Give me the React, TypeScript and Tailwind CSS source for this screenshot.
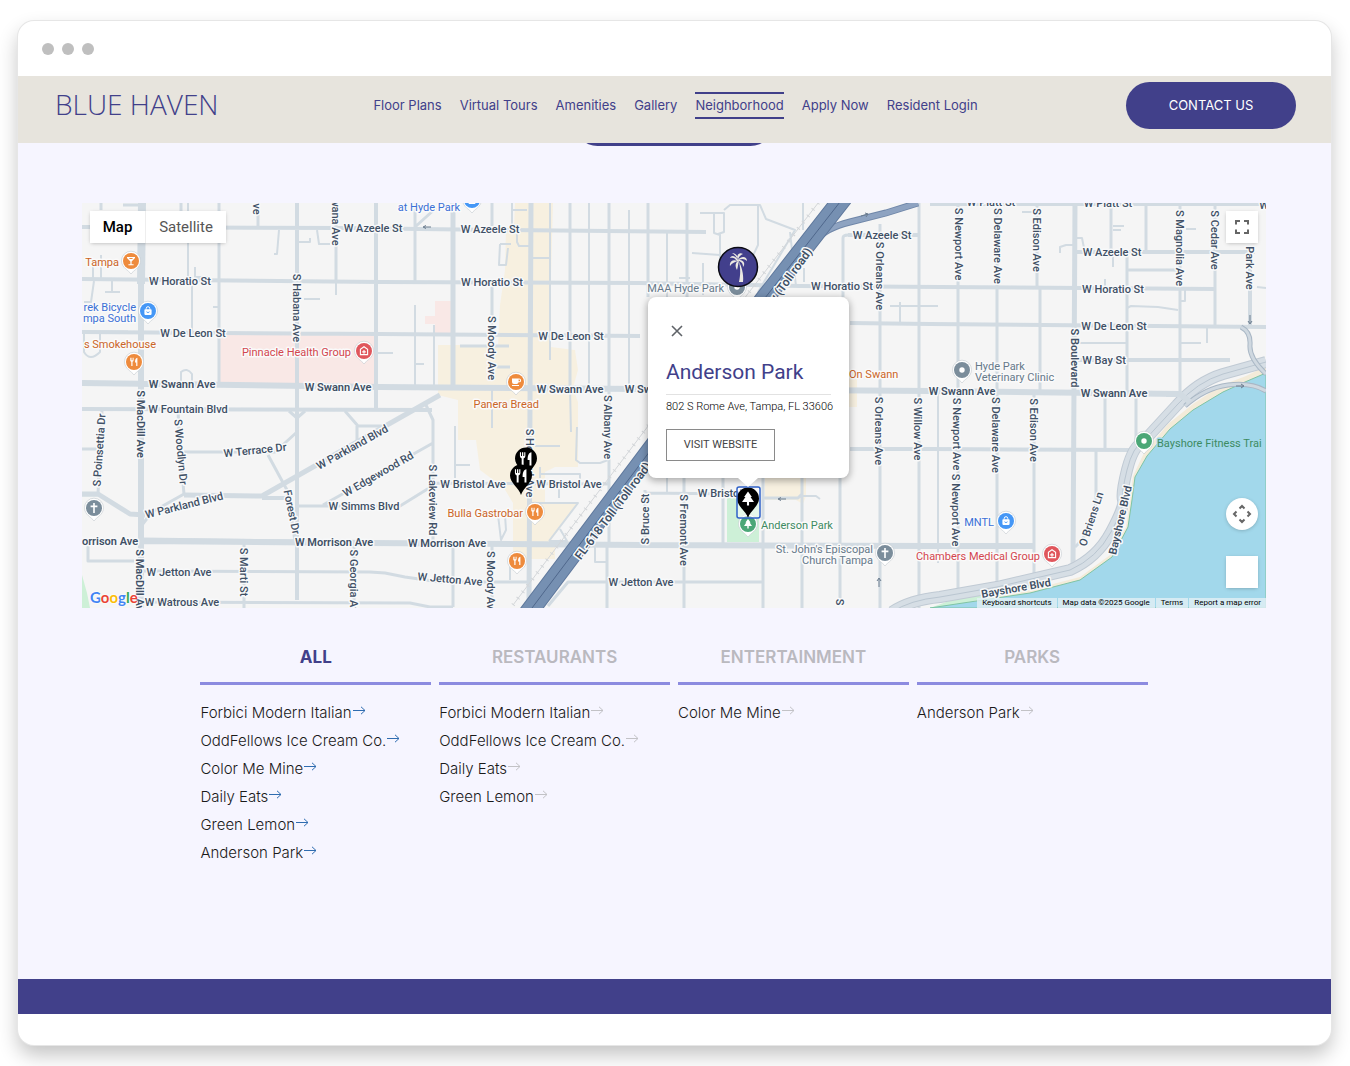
import type { ReactNode } from "react";

const NAV = [
  "Floor Plans",
  "Virtual Tours",
  "Amenities",
  "Gallery",
  "Neighborhood",
  "Apply Now",
  "Resident Login",
];

const CATEGORIES = [
  {
    name: "All",
    places: [
      "Forbici Modern Italian",
      "OddFellows Ice Cream Co.",
      "Color Me Mine",
      "Daily Eats",
      "Green Lemon",
      "Anderson Park",
    ],
  },
  {
    name: "Restaurants",
    places: ["Forbici Modern Italian", "OddFellows Ice Cream Co.", "Daily Eats", "Green Lemon"],
  },
  { name: "Entertainment", places: ["Color Me Mine"] },
  { name: "Parks", places: ["Anderson Park"] },
];

// Streets grouped by stroke width, widest last.
const STREETS = [
  {
    width: 2,
    d: "M188 203V282M192 285V332M101 255V279M93 265V279M94 281L91 302H84M112 281V292M105 292H120M195 267V277H210M219 285V307H213M336 282V295M304 299H320M279 230L277 254H274M317 230L319 244H330M299 242H310V238M415 305V388M434 325V385M376 353H393M416 364H424M550 203V360M589 203V388M629 210V388M667 232V297M512 203V226M512 210H527M533 258H550M517 224V242L519 246H529M500 244H511M500 244L499 265H506L508 248M492 388V428M570 388L571 432M577 427L576 460L580 463H600L608 460V450M455 426V478M455 465H470M535 446H560M540 467V478M540 474H580V483M559 486V498M527 503H578L549 541M560 529L567 541L549 541M498 515L501 540L506 530L505 515M510 567V580M595 547V562H608M667 478V492M890 306H938M900 302V322M790 232L796 286M804 268V282M804 286H790M822 310V330M938 394V563M1022 212H1032M1060 253V247L1066 245H1073M1077 238H1082L1084 248M1113 226H1124M1113 230H1121M1113 252V267M1105 279V286M1186 229H1196M1181 343H1201M1207 328V343M1078 343H1126M1185 290V301H1181M1127 308L1131 306L1158 307L1178 310M1257 287L1266 288M700 213H724V232L718 234M724 210L730 205H760L766 219L795 230L758 292M758 205V245L750 262M714 213V233L720 235V260M692 253L720 255M703 263V295M679 278H690M803 203V230M684 478V492M802 496H816L820 499M181 384V372Q187 367 192 374V384M84 333V352Q90 362 100 352V333",
  },
  {
    width: 3,
    d: "M101 203V210M123 205H145M181 203V215M219 203V383M258 203V228M336 203V282M415 203V282M415 227L436 208M492 203V226M492 285V330M609 203V545M570 203V388M648 203V297M687 203V297M843 297V238Q843 235 848 235M880 224V608M919 203V608M958 203V590M997 203V585M1037 203V287M1040 287V390M1034 395V575M1111 203V252M1146 203V252M1127 255V392M1180 203V392M1215 203V327M1105 396V450M1136 396V450M1096 450V500Q1094 530 1075 547M1128 270H1180M178 410L180 450L184 494M102 410L98 494M82 449H98M184 452H275L297 432V410M268 455L287 490L295 541M425 403L433 420V541M297 506H400L434 485M323 505L433 443M244 541V608M354 541V608M453 545V607M134 561H88V540M142 571L370 572L385 573L405 577L440 582H527M142 602L410 603L430 607H453M548 606L568 582H762M607 545V608M645 490V545M684 478V608M723 478V545M763 478V608M802 478V608M840 394V604M645 493L740 494M764 498L798 498L802 494M434 483L606 484Q609 484 609 480M345 411L358 426H382M357 426V440M289 411L297 418L305 411M98 495L82 495M142 525L152 512L184 494M492 545V600M460 346H509M497 367H510M82 332H128",
  },
  {
    width: 4,
    d: "M82 227L340 228L500 230L706 232M82 279L380 282L640 283L800 286L940 287L1215 289M82 332L380 334L640 336M850 323L930 324L1266 327M1077 360L1230 360M848 235H919M1077 252H1255M82 409L432 410M850 449L930 449L1131 450M930 204H1266M297 203V600M376 203V410M262 498H292M1250 260V327",
  },
  {
    width: 5,
    d: "M453 203V388M531 203L529 608M1075 203L1073 568M82 494L98 494L130 514L145 515M262 496L320 463L440 395M184 495L262 496M142 540L380 543",
  },
  {
    width: 6,
    d: "M82 383L380 387L640 389L930 391L1180 394M142 541L370 543L640 545M640 545L930 546H1034M141 280V608",
  },
  { width: 8, d: "M142 203L141 284" },
];

const BAYSHORE =
  "M892 612Q910 600 940 597L997 587 1070 570Q1097 558 1111 532T1123 500 1127 470 1143 442L1177 405Q1197 382 1223 374L1266 362";
const RAMPS = "M1185 406Q1205 388 1228 385T1266 391M1241 327Q1251 332 1250 345T1266 374";
const TOLL_ROAD = "M526 616L765 298 847 193";
const TOLL_EXIT = "M815 241Q825 228 850 222L886 213 918 203";

type Label = { t: string; x: number; y: number; r?: number; bold?: boolean };

const LABELS: Label[] = [
  { t: "ve", x: 257, y: 209, r: 90 },
  { t: "wana Ave", x: 336, y: 222, r: 90 },
  { t: "W Azeele St", x: 373, y: 228 },
  { t: "W Azeele St", x: 490, y: 229 },
  { t: "W Azeele St", x: 882, y: 235 },
  { t: "W Azeele St", x: 1112, y: 252 },
  { t: "W Horatio St", x: 180, y: 281 },
  { t: "W Horatio St", x: 492, y: 282 },
  { t: "W Horatio St", x: 842, y: 286 },
  { t: "W Horatio St", x: 1113, y: 289 },
  { t: "W De Leon St", x: 193, y: 333 },
  { t: "W De Leon St", x: 571, y: 336 },
  { t: "W De Leon St", x: 1114, y: 326 },
  { t: "W Bay St", x: 1104, y: 360 },
  { t: "W Platt St", x: 991, y: 202 },
  { t: "W Platt St", x: 1108, y: 203 },
  { t: "W", x: 1264, y: 205 },
  { t: "W Swann Ave", x: 182, y: 384, bold: true },
  { t: "W Swann Ave", x: 338, y: 387, bold: true },
  { t: "W Swann Ave", x: 570, y: 389, bold: true },
  { t: "W Swann Ave", x: 658, y: 389, bold: true },
  { t: "W Swann Ave", x: 962, y: 391, bold: true },
  { t: "W Swann Ave", x: 1114, y: 393, bold: true },
  { t: "W Fountain Blvd", x: 188, y: 409 },
  { t: "W Terrace Dr", x: 255, y: 450, r: -6 },
  { t: "W Parkland Blvd", x: 352, y: 447, r: -29 },
  { t: "W Parkland Blvd", x: 184, y: 505, r: -14 },
  { t: "W Edgewood Rd", x: 378, y: 474, r: -30 },
  { t: "W Simms Blvd", x: 364, y: 506 },
  { t: "W Bristol Ave", x: 473, y: 484 },
  { t: "W Bristol Ave", x: 569, y: 484 },
  { t: "W Bristol", x: 720, y: 493 },
  { t: "W Morrison Ave", x: 99, y: 541, bold: true },
  { t: "W Morrison Ave", x: 334, y: 542, bold: true },
  { t: "W Morrison Ave", x: 447, y: 543, bold: true },
  { t: "W Jetton Ave", x: 179, y: 572 },
  { t: "W Jetton Ave", x: 450, y: 579, r: 5 },
  { t: "W Jetton Ave", x: 641, y: 582 },
  { t: "W Watrous Ave", x: 182, y: 602 },
  { t: "S Habana Ave", x: 297, y: 308, r: 90 },
  { t: "S Moody Ave", x: 492, y: 348, r: 90 },
  { t: "S Moody Ave", x: 491, y: 583, r: 90 },
  { t: "S Howard Ave", x: 530, y: 463, r: 90 },
  { t: "S Albany Ave", x: 608, y: 427, r: 90 },
  { t: "S MacDill Ave", x: 141, y: 424, r: 90, bold: true },
  { t: "S MacDill Ave", x: 140, y: 583, r: 90, bold: true },
  { t: "S Poinsettia Dr", x: 99, y: 450, r: -86 },
  { t: "S Woodlyn Dr", x: 181, y: 452, r: 85 },
  { t: "Forest Dr", x: 292, y: 512, r: 78 },
  { t: "S Lakeview Rd", x: 433, y: 500, r: 90 },
  { t: "S Marti St", x: 244, y: 572, r: 90 },
  { t: "S Georgia Ave", x: 354, y: 584, r: 90 },
  { t: "S Bruce St", x: 645, y: 519, r: -90 },
  { t: "S Fremont Ave", x: 684, y: 530, r: 90 },
  { t: "S Orleans Ave", x: 880, y: 276, r: 90 },
  { t: "S Orleans Ave", x: 879, y: 431, r: 90 },
  { t: "S Willow Ave", x: 918, y: 429, r: 90 },
  { t: "S", x: 840, y: 602, r: 90 },
  { t: "S Newport Ave", x: 959, y: 244, r: 90 },
  { t: "S Newport Ave", x: 957, y: 434, r: 90 },
  { t: "S Newport Ave", x: 956, y: 510, r: 90 },
  { t: "S Delaware Ave", x: 998, y: 246, r: 90 },
  { t: "S Delaware Ave", x: 996, y: 435, r: 90 },
  { t: "S Edison Ave", x: 1037, y: 240, r: 90 },
  { t: "S Edison Ave", x: 1034, y: 430, r: 90 },
  { t: "S Magnolia Ave", x: 1180, y: 248, r: 90 },
  { t: "S Cedar Ave", x: 1215, y: 240, r: 90 },
  { t: "Hyde Park Ave", x: 1250, y: 254, r: 90 },
  { t: "S Boulevard", x: 1075, y: 358, r: 90, bold: true },
  { t: "O Briens Ln", x: 1091, y: 519, r: -72 },
  { t: "Bayshore Blvd", x: 1120, y: 520, r: -77, bold: true },
  { t: "Bayshore Blvd", x: 1016, y: 588, r: -10, bold: true },
];

const COLORS = {
  food: ["#ee8b3d", "#cb6527"],
  shop: ["#4597f6", "#3a70d6"],
  health: ["#e0565c", "#d3464e"],
  civic: ["#7b8d9b", "#66798a"],
  park: ["#4ba777", "#3d8b62"],
};

type Kind = keyof typeof COLORS;
type Glyph = "fork" | "glass" | "cup" | "bag" | "cross" | "clinic" | "dot" | "tree";

const POIS: { x: number; y: number; kind: Kind; glyph: Glyph }[] = [
  { x: 131, y: 261, kind: "food", glyph: "glass" },
  { x: 148, y: 311, kind: "shop", glyph: "bag" },
  { x: 134, y: 362, kind: "food", glyph: "fork" },
  { x: 364, y: 351, kind: "health", glyph: "clinic" },
  { x: 472, y: 200, kind: "shop", glyph: "bag" },
  { x: 516, y: 382, kind: "food", glyph: "cup" },
  { x: 535, y: 512, kind: "food", glyph: "fork" },
  { x: 517, y: 561, kind: "food", glyph: "fork" },
  { x: 737, y: 287, kind: "civic", glyph: "dot" },
  { x: 94, y: 508, kind: "civic", glyph: "cross" },
  { x: 748, y: 524, kind: "park", glyph: "tree" },
  { x: 885, y: 553, kind: "civic", glyph: "cross" },
  { x: 962, y: 370, kind: "civic", glyph: "dot" },
  { x: 1006, y: 521, kind: "shop", glyph: "bag" },
  { x: 1052, y: 554, kind: "health", glyph: "clinic" },
  { x: 1144, y: 441, kind: "park", glyph: "dot" },
];

const POI_LABELS: { t: string; x: number; y: number; kind: Kind; end?: boolean }[] = [
  { t: "Tampa", x: 119, y: 262, kind: "food", end: true },
  { t: "rek Bicycle", x: 136, y: 307, kind: "shop", end: true },
  { t: "mpa South", x: 136, y: 318, kind: "shop", end: true },
  { t: "s Smokehouse", x: 156, y: 344, kind: "food", end: true },
  { t: "Pinnacle Health Group", x: 351, y: 352, kind: "health", end: true },
  { t: "at Hyde Park", x: 460, y: 207, kind: "shop", end: true },
  { t: "Panera Bread", x: 539, y: 404, kind: "food", end: true },
  { t: "Bulla Gastrobar", x: 523, y: 513, kind: "food", end: true },
  { t: "MAA Hyde Park", x: 724, y: 288, kind: "civic", end: true },
  { t: "On Swann", x: 849, y: 374, kind: "food" },
  { t: "Anderson Park", x: 761, y: 525, kind: "park" },
  { t: "St. John's Episcopal", x: 873, y: 549, kind: "civic", end: true },
  { t: "Church Tampa", x: 873, y: 560, kind: "civic", end: true },
  { t: "Hyde Park", x: 975, y: 366, kind: "civic" },
  { t: "Veterinary Clinic", x: 975, y: 377, kind: "civic" },
  { t: "MNTL", x: 994, y: 522, kind: "shop", end: true },
  { t: "Chambers Medical Group", x: 1040, y: 556, kind: "health", end: true },
  { t: "Bayshore Fitness Trai", x: 1157, y: 443, kind: "park" },
];

function PoiGlyph({ glyph, fill }: { glyph: Glyph; fill: string }) {
  switch (glyph) {
    case "fork":
      return (
        <path
          d="M-3.8-4.2v2.4a1.6 1.6 0 0 0 1.1 1.5V4h1.2V-.3A1.6 1.6 0 0 0-.4-1.8v-2.4h-.7v2.4h-.6v-2.4h-.8v2.4h-.6v-2.4zM3.4-4.2C1.8-4 1-2.4 1 .6h1.2V4h1.2z"
          fill="#fff"
        />
      );
    case "glass":
      return <path d="M-4-4h8v1L.6.6v2.6h2v1h-5.2v-1h2V.6L-4-3zM-2-3l.8.9h2.4L2-3z" fill="#fff" />;
    case "cup":
      return (
        <path
          d="M-4-3.5h7.2a1.9 1.9 0 0 1 0 3.8h-.7A2 2 0 0 1 .6 2H-2a2 2 0 0 1-2-2zM2.6-2.5v1.8h.6a.9.9 0 0 0 0-1.8zM-4 3h7v1h-7z"
          fill="#fff"
        />
      );
    case "bag":
      return (
        <>
          <path d="M-1.8-1.5v-1a1.8 1.8 0 0 1 3.6 0v1" fill="none" stroke="#fff" />
          <rect x="-3.6" y="-1.7" width="7.2" height="5.6" rx=".8" fill="#fff" />
          <path d="M-1.3.4a1.3 1.3 0 0 0 2.6 0" fill="none" stroke={fill} strokeWidth=".8" />
        </>
      );
    case "cross":
      return <path d="M-.8-5H.8v2.6h2.6v1.6H.8V5H-.8V-.8h-2.6v-1.6H-.8z" fill="#fff" />;
    case "clinic":
      return (
        <path
          d="M-3.6 3.6v-5.2L0-4.2l3.6 2.6v5.2zM-1.8.9H1.8M0-.9V2.7"
          fill="none"
          stroke="#fff"
          strokeWidth="1.1"
        />
      );
    case "dot":
      return <circle r="2.7" fill="#fff" />;
    case "tree":
      return <path d="M0-5l2.6 3.6H1.7L4 2H.7v2.4H-.7V2H-4l2.3-3.4h-.9z" fill="#fff" />;
  }
}

function BlackPin({ x, y, children }: { x: number; y: number; children: ReactNode }) {
  return (
    <g transform={`translate(${x} ${y})`}>
      <path d="M0 19C-2 12-11 7-11-.5A11 11 0 0 1 11-.5C11 7 2 12 0 19z" fill="#000" />
      {children}
    </g>
  );
}

function StreetMap() {
  return (
    <svg
      className="block h-full w-full font-[Roboto,sans-serif]"
      viewBox="82 203 1184 405"
      preserveAspectRatio="xMidYMid slice"
      role="img"
      aria-label="Map of Hyde Park, Tampa"
    >
      <rect x="82" y="203" width="1184" height="405" fill="#f5f5f5" />

      {/* blocks */}
      <g fill="#f7f0e0">
        <path d="M515 203h38l-2 72v72l24 3 3 20-5 18 5 14v65h-23l-10 5v31h33l-29 40h6v16h-42v-56l-9-15-24-18-4-30h-18v-40l-20-5v-50h60l2-40 5-35 1-42h8z" />
        <path d="M765 470h41v26l-3 8-7-4h-31zM849 370h8v37h-8z" />
      </g>
      <path d="M220 334h156v52l-156-3zM435 301h16v32h-16v-9h-10v-8h10z" fill="#f9e8e6" />
      <path d="M727 498h32v44h-32zM82 575l5 18 3 15h-8zM930 608l70-26 40-7v10l-76 23z" fill="#cdf0d7" />

      {/* bay */}
      <path
        d="M1266 366L1246 376 1220 386 1193 404 1168 424 1144 453 1133 476 1130 500 1126 527 1110 555 1080 577 1030 590 963 603 963 608H1266z"
        fill="#f3ebd9"
      />
      <path
        d="M1266 373L1245 382 1223 392 1193 410 1170 429 1147 456 1135 477 1132 500 1128 527 1112 557 1080 580 1030 593 963 603 930 608H1266z"
        fill="#a2d8eb"
        stroke="#7fc4a4"
      />

      <g fill="none" stroke="#d2dbe2" strokeLinejoin="round">
        {STREETS.map((s) => (
          <path key={s.width} d={s.d} strokeWidth={s.width} />
        ))}
      </g>

      {/* Bayshore Blvd */}
      <g fill="none" strokeLinejoin="round">
        <path d={BAYSHORE} stroke="#c0cad4" strokeWidth="12" />
        <path d={BAYSHORE} stroke="#d6dee5" strokeWidth="10" />
        <path d={BAYSHORE} stroke="#bac6d1" strokeWidth="1" />
        <path d={RAMPS} stroke="#a9b7c5" strokeWidth="5" />
        <path d={RAMPS} stroke="#cfd8e0" strokeWidth="3" />
        <path d="M1166 394H1180L1190 402" stroke="#d2dbe2" strokeWidth="6" />
      </g>

      {/* expressway */}
      <g fill="none">
        <path d="M513 605L750 291 822 198" stroke="#d3d6d9" strokeWidth="1" />
        <path d="M513 605L750 291 822 198" stroke="#d3d6d9" strokeDasharray="1 7" strokeWidth="4" />
        <path d={TOLL_EXIT} stroke="#6f86a8" strokeWidth="7" />
        <path d={TOLL_EXIT} stroke="#8ea3c1" strokeWidth="5" />
        <path d={TOLL_ROAD} stroke="#60799d" strokeWidth="19" />
        <path d={TOLL_ROAD} stroke="#7690b2" strokeWidth="17" />
        <path d={TOLL_ROAD} stroke="#4f678c" strokeWidth="1" />
      </g>
      <path
        d="M431 227h-7m2-1.5l-3 1.5 3 1.5M861 216l7-2m-3-1l3 1-2 3M786 499h-7m2-1.5l-3 1.5 3 1.5M879 587v-8m-2 2l2-3 2 3M1250 315v8m-2-2l2 3 2-3M1236 386h7m-2-2l3 2-3 2"
        fill="none"
        stroke="#6b7c8e"
      />

      <g
        fill="#3f5065"
        stroke="#f8f9fa"
        strokeWidth="3"
        strokeLinejoin="round"
        paintOrder="stroke"
        textAnchor="middle"
        fontSize="11"
      >
        {LABELS.map((l) => (
          <text
            key={`${l.t}-${l.x}-${l.y}`}
            transform={`translate(${l.x} ${l.y}) rotate(${l.r ?? 0})`}
            y="4"
            fontWeight={l.bold ? 600 : 500}
          >
            {l.t}
          </text>
        ))}
        <text transform="translate(613 511) rotate(-53)" y="4" fontSize="12" fontWeight="600">
          FL-618 Toll (Toll road)
        </text>
        <text transform="translate(785 283) rotate(-54)" y="4" fontSize="12" fontWeight="600">
          Expy (Toll road)
        </text>
      </g>

      {POIS.map((p) => (
        <g key={`${p.x}-${p.y}`} transform={`translate(${p.x} ${p.y})`}>
          <path
            d="M0 13C-2 9.5-9.5 7-9.5-.3A9.5 9.5 0 0 1 9.5-.3C9.5 7 2 9.5 0 13z"
            fill="#fff"
            stroke="#c3c9ce"
            strokeWidth=".6"
          />
          <circle r="8" fill={COLORS[p.kind][0]} />
          <PoiGlyph glyph={p.glyph} fill={COLORS[p.kind][0]} />
        </g>
      ))}

      <g stroke="#fafafa" strokeWidth="3" strokeLinejoin="round" paintOrder="stroke" fontSize="11">
        {POI_LABELS.map((l) => (
          <text
            key={`${l.t}-${l.y}`}
            x={l.x}
            y={l.y + 4}
            fill={COLORS[l.kind][1]}
            stroke={l.t.startsWith("Bayshore") ? "#a2d8eb" : "#fafafa"}
            textAnchor={l.end ? "end" : "start"}
          >
            {l.t}
          </text>
        ))}
      </g>

      {/* property marker */}
      <g transform="translate(738 267)">
        <circle r="19.5" fill="#423f8c" stroke="#0b0b14" strokeWidth="1.5" />
        <path
          d="M1 15C2.5 8 3-1 0-7 3-2 6 6 5 15zM0-7C-3-12-7-12-8-9-5-10-3-9-1-6-5-8-9-5-8-1-6-4-3-5 0-6-3-4-3 0-1 3 0 0 0-3 1-6 4-5 5-3 5 0 8-4 5-7 1-7 4-9 7-8 9-6 9-10 4-12 0-7 1-11 3-12 5-13 1-15-2-12 0-7zM0-7C-2-11-4-13-6-14-3-14 0-12 0-7z"
          fill="#ece9e2"
        />
      </g>

      <BlackPin x={526} y={459}>
        <g transform="scale(1.6)">
          <PoiGlyph glyph="fork" fill="#000" />
        </g>
      </BlackPin>
      <BlackPin x={521} y={476}>
        <g transform="scale(1.6)">
          <PoiGlyph glyph="fork" fill="#000" />
        </g>
      </BlackPin>
      <rect x="737" y="487" width="23" height="31" rx="2" fill="#fff" fillOpacity=".5" />
      <BlackPin x={748} y={499}>
        <g transform="scale(1.5)">
          <PoiGlyph glyph="tree" fill="#000" />
        </g>
      </BlackPin>
      <rect x="737" y="487" width="23" height="31" rx="2" fill="none" stroke="#2f62c9" strokeWidth="1.5" />
    </svg>
  );
}

function InfoWindow() {
  return (
    <div className="absolute top-[94px] left-[566px] w-[201px] rounded-lg bg-white px-[18px] pt-[23px] pb-[17px] font-[Roboto,sans-serif] shadow-[0_2px_7px_1px_rgba(0,0,0,0.3)]">
      <button type="button" aria-label="Close" className="block p-[5px]">
        <svg width="12" height="12" viewBox="0 0 12 12" className="stroke-[#5f6368]" strokeWidth="1.6">
          <path d="M1 1l10 10M11 1L1 11" />
        </svg>
      </button>
      <h3 className="mt-[15px] border-b border-[#e2e2e2] pb-[7px] text-[21px] leading-[30px] whitespace-nowrap text-[#41408a]">
        Anderson Park
      </h3>
      <p className="mt-1 text-[11px] leading-4 font-light whitespace-nowrap text-black">
        802 S Rome Ave, Tampa, FL 33606
      </p>
      <a
        href="#anderson-park"
        className="mt-[14px] flex h-8 w-[109px] items-center justify-center border border-[#8a8a8a] text-[11px] text-[#444]"
      >
        VISIT WEBSITE
      </a>
      <div className="absolute top-full left-[90px] h-[9px] w-5 bg-white [clip-path:polygon(0_0,100%_0,50%_100%)]" />
    </div>
  );
}

function MapPanel() {
  return (
    <div className="relative h-[405px] overflow-hidden font-[Roboto,sans-serif]">
      <StreetMap />
      <InfoWindow />

      <div className="absolute top-2 left-2 flex h-8 bg-white text-[15px] shadow-[0_1px_4px_-1px_rgba(0,0,0,0.3)]">
        <button type="button" className="w-14 border-r border-[#eee] font-medium text-black">
          Map
        </button>
        <button type="button" className="w-20 text-[#565656]">
          Satellite
        </button>
      </div>

      <button
        type="button"
        aria-label="Toggle fullscreen view"
        className="absolute top-2 right-2 flex size-8 items-center justify-center bg-white shadow-[0_1px_4px_-1px_rgba(0,0,0,0.3)]"
      >
        <svg width="16" height="16" viewBox="0 0 16 16" fill="none" stroke="#666" strokeWidth="2">
          <path d="M2 5.500V2h4M10 2h4v3.500M14 10.500V14h-4M6 14H2v-3.500" />
        </svg>
      </button>
      <button
        type="button"
        aria-label="Map camera controls"
        className="absolute right-2 bottom-[78px] flex size-8 items-center justify-center rounded-full bg-white shadow-[0_1px_4px_-1px_rgba(0,0,0,0.3)]"
      >
        <svg width="20" height="20" viewBox="0 0 20 20" fill="none" stroke="#666" strokeWidth="2">
          <path d="M7.5 4.5L10 2 12.5 4.5M7.5 15.500l2.500 2.500 2.500-2.500M4.500 7.500L2 10 4.500 12.500M15.500 7.500l2.500 2.500-2.500 2.500" />
        </svg>
      </button>
      <button
        type="button"
        aria-label="Street View"
        className="absolute right-2 bottom-5 size-8 bg-white shadow-[0_1px_4px_-1px_rgba(0,0,0,0.3)]"
      />

      <a
        href="#google-maps"
        aria-label="Google"
        className="absolute bottom-0 left-2 font-[Lato,sans-serif] text-[15px] leading-[22px] font-bold [text-shadow:0_0_2px_#fff,0_0_2px_#fff]"
      >
        <span className="text-[#4285f4]">G</span>
        <span className="text-[#ea4335]">o</span>
        <span className="text-[#fbbc05]">o</span>
        <span className="text-[#4285f4]">g</span>
        <span className="text-[#34a853]">l</span>
        <span className="text-[#ea4335]">e</span>
      </a>

      <div className="absolute right-0 bottom-0 flex h-[10px] items-center gap-px text-[8px] leading-[10px] text-black">
        <button type="button" className="bg-[#e3f0f5]/80 px-[5px]">
          Keyboard shortcuts
        </button>
        <span className="bg-[#e3f0f5]/80 px-[5px]">Map data ©2025 Google</span>
        <a href="#terms" className="bg-[#e3f0f5]/80 px-[5px]">
          Terms
        </a>
        <a href="#report" className="bg-[#e3f0f5]/80 px-[5px]">
          Report a map error
        </a>
      </div>
    </div>
  );
}

function PlaceLink({ name, active }: { name: string; active: boolean }) {
  return (
    <li>
      <a href="#map" className="inline-flex items-center whitespace-nowrap">
        {name}
        <svg
          width="14"
          height="9"
          viewBox="0 0 14 9"
          fill="none"
          stroke={active ? "#2f6cb0" : "#c2c2c6"}
          className="mb-[6px]"
        >
          <path d="M1 4.5h12M9 .8l4 3.7-4 3.7" />
        </svg>
      </a>
    </li>
  );
}

export default function App() {
  return (
    <div className="bg-white pt-[21px] pb-[21px] font-[Inter,sans-serif]">
      <div className="mr-[19px] ml-[18px] overflow-hidden rounded-2xl bg-white shadow-[0_0_0_1px_#e6e6e6,0_10px_20px_rgba(0,0,0,0.24)]">
        <div className="flex h-[55px] items-center gap-2 px-6">
          <span className="size-3 rounded-full bg-[#bfbfbf]" />
          <span className="size-3 rounded-full bg-[#bfbfbf]" />
          <span className="size-3 rounded-full bg-[#bfbfbf]" />
        </div>

        <header className="relative z-10 grid grid-cols-[1fr_auto_1fr] items-center bg-[#e7e4dd] pt-[6px] pr-[35px] pb-[14px] pl-[37px] text-[#41408a]">
          <a href="#home" className="pb-1 font-['Open_Sans',sans-serif] text-[28px] leading-8 font-light">
            BLUE HAVEN
          </a>
          <nav className="flex gap-[18px] text-[13px]">
            {NAV.map((item) => (
              <a
                key={item}
                href={`#${item.toLowerCase().replace(" ", "-")}`}
                className={
                  item === "Neighborhood"
                    ? "border-y-2 border-[#41408a] leading-[23px] whitespace-nowrap"
                    : "border-y-2 border-transparent leading-[23px] whitespace-nowrap"
                }
              >
                {item}
              </a>
            ))}
          </nav>
          <a
            href="#contact"
            className="flex h-[47px] w-[170px] items-center justify-center justify-self-end rounded-full bg-[#41408a] text-[13px] text-white"
          >
            CONTACT US
          </a>
        </header>

        <main className="bg-[#f6f5ff] pr-[65px] pb-[112px] pl-16">
          {/* scrolled under the header */}
          <div className="mx-auto -mt-11 h-[47px] w-[200px] rounded-full bg-[#41408a]" />

          <div id="map" className="mt-[57px]">
            <MapPanel />
          </div>

          <div className="mx-auto mt-[33px] grid w-4/5 grid-cols-4 gap-2">
            {CATEGORIES.map((c, i) => (
              <section key={c.name}>
                <button
                  type="button"
                  className={
                    i === 0
                      ? "block h-11 w-full border-b-3 border-[#8c8be0] pb-[7px] text-[17px] font-bold text-[#41408a] uppercase"
                      : "block h-11 w-full border-b-3 border-[#8c8be0] pb-[7px] text-[17px] font-semibold text-[#bab9bf] uppercase"
                  }
                >
                  {c.name}
                </button>
                <ul className="mt-[14px] text-[15px] leading-7 font-light text-[#1a1a1a]">
                  {c.places.map((p) => (
                    <PlaceLink key={p} name={p} active={i === 0} />
                  ))}
                </ul>
              </section>
            ))}
          </div>
        </main>

        <footer>
          <div className="h-[35px] bg-[#41408a]" />
          <div className="h-[31px]" />
        </footer>
      </div>
    </div>
  );
}
